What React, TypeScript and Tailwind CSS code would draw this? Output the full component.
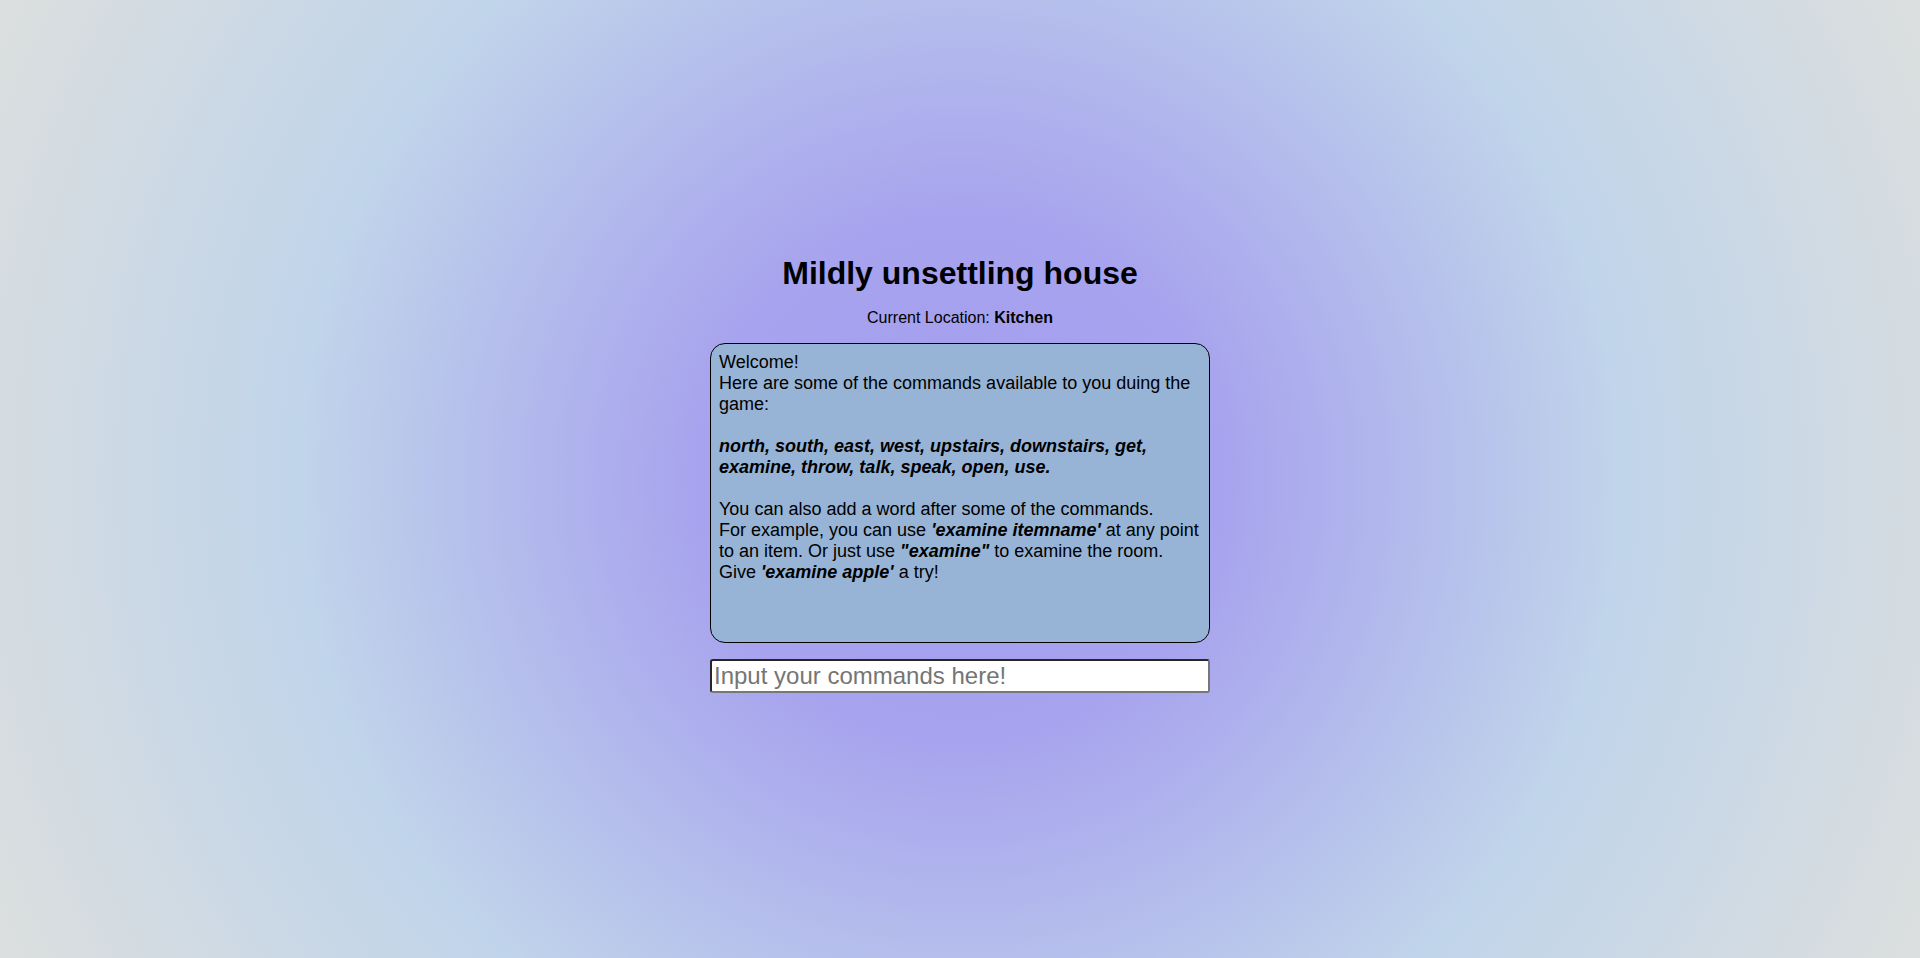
import React from "react";

export default function App() {
  return (
    <div
      className="min-h-screen w-full flex flex-col items-center pt-[255px] text-black"
      style={{
        fontFamily: '"Liberation Sans", Arial, sans-serif',
        backgroundImage:
          "radial-gradient(circle at 50% 50%, #a49eee 0px, #a7a3ee 260px, #c0d4ea 660px, #dcdfde 1073px)",
      }}
    >
      <h1 className="text-[32px] leading-[37px] font-bold m-0">Mildly unsettling house</h1>
      <p className="text-[16px] leading-[18px] mt-[17px]">
        Current Location: <span className="font-bold">Kitchen</span>
      </p>
      <div className="mt-[16px] w-[500px] h-[300px] border border-black rounded-[15px] bg-[#97b4d6] p-[8px] text-[18px] leading-[21px]">
        Welcome!
        <br />
        Here are some of the commands available to you duing the game:
        <br />
        <br />
        <b>
          <i>north, south, east, west, upstairs, downstairs, get, examine, throw, talk, speak, open, use.</i>
        </b>
        <br />
        <br />
        You can also add a word after some of the commands.
        <br />
        For example, you can use{" "}
        <b>
          <i>'examine itemname'</i>
        </b>{" "}
        at any point to an item. Or just use{" "}
        <b>
          <i>"examine"</i>
        </b>{" "}
        to examine the room.
        <br />
        Give{" "}
        <b>
          <i>'examine apple'</i>
        </b>{" "}
        a try!
      </div>
      <input
        type="text"
        placeholder="Input your commands here!"
        className="mt-[16px] w-[500px] h-[34px] bg-white border-2 border-solid border-t-[#262626] border-l-[#262626] border-b-[#777777] border-r-[#777777] rounded-[3px] px-[2px] py-[1px] text-[24px] leading-[1.15] placeholder:text-[#757575] outline-none"
        style={{ fontFamily: '"Liberation Sans", Arial, sans-serif' }}
      />
    </div>
  );
}
